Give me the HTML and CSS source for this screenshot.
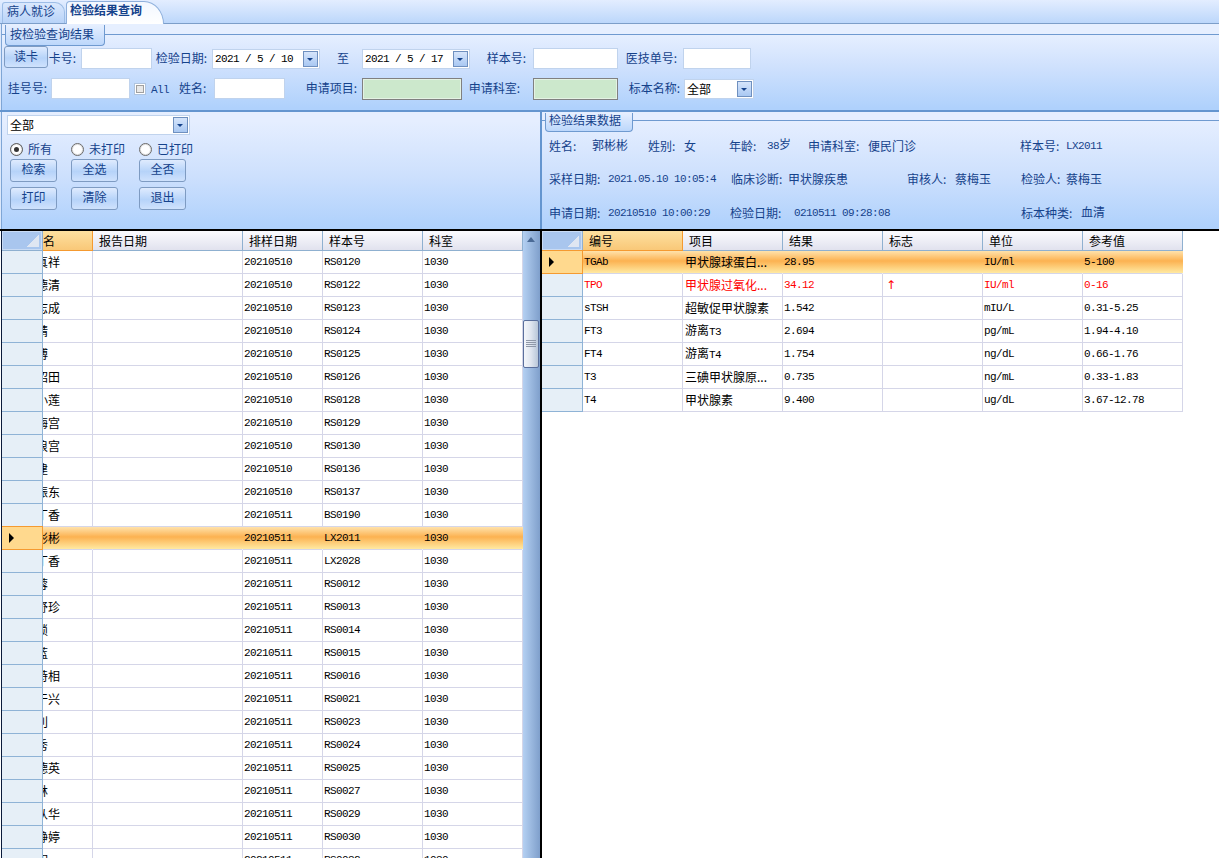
FILE: index.html
```html
<!DOCTYPE html>
<html lang="zh">
<head>
<meta charset="utf-8">
<title>检验结果查询</title>
<link rel="stylesheet" href="styles.css">
</head>
<body>
<nav class="tabs">
  <div class="tab">病人就诊</div>
  <div class="tab active">检验结果查询</div>
</nav>

<section class="query">
  <div class="fieldset">
    <div class="legend">按检验查询结果</div>
    <div class="row row1">
      <button class="btn read">读卡</button>
      <label class="lbl">卡号:</label>
      <div class="input"></div>
      <label class="lbl">检验日期:</label>
      <div class="combo date"><span class="m">2021 / 5 / 10</span><i class="drop"></i></div>
      <label class="lbl to">至</label>
      <div class="combo date"><span class="m">2021 / 5 / 17</span><i class="drop"></i></div>
      <label class="lbl p7">样本号:</label>
      <div class="input"></div>
      <label class="lbl p6">医技单号:</label>
      <div class="input"></div>
    </div>
    <div class="row row2">
      <label class="lbl p4">挂号号:</label>
      <div class="input"></div>
      <div class="check"><i class="box"></i><span class="m">All</span></div>
      <label class="lbl wide">姓名:</label>
      <div class="input"></div>
      <label class="lbl">申请项目:</label>
      <div class="input green"></div>
      <label class="lbl far">申请科室:</label>
      <div class="input green"></div>
      <label class="lbl p4">标本名称:</label>
      <div class="combo sample"><span>全部</span><i class="drop"></i></div>
    </div>
  </div>
</section>

<div class="lower">
  <section class="filter">
    <div class="combo all"><span>全部</span><i class="drop"></i></div>
    <div class="radios">
      <div class="radio on"><i></i>所有</div>
      <div class="radio"><i></i>未打印</div>
      <div class="radio"><i></i>已打印</div>
    </div>
    <div class="btns">
      <button class="btn">检索</button>
      <button class="btn">全选</button>
      <button class="btn">全否</button>
      <button class="btn">打印</button>
      <button class="btn">清除</button>
      <button class="btn">退出</button>
    </div>
  </section>
  <section class="info">
    <div class="fieldset">
      <div class="legend small">检验结果数据</div>
      <div class="irow i1">
        <span>姓名:</span><span class="up">郭彬彬</span><span>姓别:</span><span>女</span><span>年龄:</span><span class="up"><b class="m">38</b>岁</span><span>申请科室:</span><span>便民门诊</span><span>样本号:</span><span class="m">LX2011</span>
      </div>
      <div class="irow i2">
        <span>采样日期:</span><span class="m">2021.05.10 10:05:4</span><span>临床诊断:</span><span>甲状腺疾患</span><span>审核人:</span><span>蔡梅玉</span><span>检验人:</span><span>蔡梅玉</span>
      </div>
      <div class="irow i3">
        <span>申请日期:</span><span class="m">20210510 10:00:29</span><span>检验日期:</span><span class="m">0210511 09:28:08</span><span>标本种类:</span><span class="up">血清</span>
      </div>
    </div>
  </section>
</div>

<div class="grids">
  <div class="gridwrap left">
    <table class="grid">
      <colgroup><col class="c41"><col class="c50"><col class="c150"><col class="c80"><col class="c100"><col class="c100"></colgroup>
      <thead><tr><th class="corner"></th><th class="hot clip">名</th><th>报告日期</th><th>排样日期</th><th>样本号</th><th>科室</th></tr></thead>
      <tbody>
        <tr><td class="rh"></td><td class="name">真祥</td><td></td><td>20210510</td><td>RS0120</td><td>1030</td></tr>
        <tr><td class="rh"></td><td class="name">德清</td><td></td><td>20210510</td><td>RS0122</td><td>1030</td></tr>
        <tr><td class="rh"></td><td class="name">志成</td><td></td><td>20210510</td><td>RS0123</td><td>1030</td></tr>
        <tr><td class="rh"></td><td class="name">靖</td><td></td><td>20210510</td><td>RS0124</td><td>1030</td></tr>
        <tr><td class="rh"></td><td class="name">博</td><td></td><td>20210510</td><td>RS0125</td><td>1030</td></tr>
        <tr><td class="rh"></td><td class="name">绍田</td><td></td><td>20210510</td><td>RS0126</td><td>1030</td></tr>
        <tr><td class="rh"></td><td class="name">小莲</td><td></td><td>20210510</td><td>RS0128</td><td>1030</td></tr>
        <tr><td class="rh"></td><td class="name">梅宫</td><td></td><td>20210510</td><td>RS0129</td><td>1030</td></tr>
        <tr><td class="rh"></td><td class="name">浪宫</td><td></td><td>20210510</td><td>RS0130</td><td>1030</td></tr>
        <tr><td class="rh"></td><td class="name">建</td><td></td><td>20210510</td><td>RS0136</td><td>1030</td></tr>
        <tr><td class="rh"></td><td class="name">振东</td><td></td><td>20210510</td><td>RS0137</td><td>1030</td></tr>
        <tr><td class="rh"></td><td class="name">丁香</td><td></td><td>20210511</td><td>BS0190</td><td>1030</td></tr>
        <tr class="sel"><td class="rh"></td><td class="name">彬彬</td><td></td><td>20210511</td><td>LX2011</td><td>1030</td></tr>
        <tr><td class="rh"></td><td class="name">丁香</td><td></td><td>20210511</td><td>LX2028</td><td>1030</td></tr>
        <tr><td class="rh"></td><td class="name">蓉</td><td></td><td>20210511</td><td>RS0012</td><td>1030</td></tr>
        <tr><td class="rh"></td><td class="name">舒珍</td><td></td><td>20210511</td><td>RS0013</td><td>1030</td></tr>
        <tr><td class="rh"></td><td class="name">锁</td><td></td><td>20210511</td><td>RS0014</td><td>1030</td></tr>
        <tr><td class="rh"></td><td class="name">蓝</td><td></td><td>20210511</td><td>RS0015</td><td>1030</td></tr>
        <tr><td class="rh"></td><td class="name">特相</td><td></td><td>20210511</td><td>RS0016</td><td>1030</td></tr>
        <tr><td class="rh"></td><td class="name">干兴</td><td></td><td>20210511</td><td>RS0021</td><td>1030</td></tr>
        <tr><td class="rh"></td><td class="name">利</td><td></td><td>20210511</td><td>RS0023</td><td>1030</td></tr>
        <tr><td class="rh"></td><td class="name">秀</td><td></td><td>20210511</td><td>RS0024</td><td>1030</td></tr>
        <tr><td class="rh"></td><td class="name">德英</td><td></td><td>20210511</td><td>RS0025</td><td>1030</td></tr>
        <tr><td class="rh"></td><td class="name">林</td><td></td><td>20210511</td><td>RS0027</td><td>1030</td></tr>
        <tr><td class="rh"></td><td class="name">从华</td><td></td><td>20210511</td><td>RS0029</td><td>1030</td></tr>
        <tr><td class="rh"></td><td class="name">静婷</td><td></td><td>20210511</td><td>RS0030</td><td>1030</td></tr>
        <tr><td class="rh"></td><td class="name">明</td><td></td><td>20210511</td><td>RS0032</td><td>1030</td></tr>
      </tbody>
    </table>
    <div class="scrollbar">
      <div class="sb-up"></div>
      <div class="thumb"><i></i></div>
    </div>
  </div>
  <div class="gridwrap right">
    <table class="grid results">
      <colgroup><col class="c41"><col class="c100"><col class="c100"><col class="c100"><col class="c100"><col class="c100"><col class="c100"></colgroup>
      <thead><tr><th class="corner"></th><th class="hot">编号</th><th>项目</th><th>结果</th><th>标志</th><th>单位</th><th>参考值</th></tr></thead>
      <tbody>
        <tr class="sel"><td class="rh"></td><td>TGAb</td><td class="cn">甲状腺球蛋白...</td><td>28.95</td><td></td><td>IU/ml</td><td>5-100</td></tr>
        <tr class="red"><td class="rh"></td><td>TPO</td><td class="cn">甲状腺过氧化...</td><td>34.12</td><td class="flag">↑</td><td>IU/ml</td><td>0-16</td></tr>
        <tr><td class="rh"></td><td>sTSH</td><td class="cn">超敏促甲状腺素</td><td>1.542</td><td></td><td>mIU/L</td><td>0.31-5.25</td></tr>
        <tr><td class="rh"></td><td>FT3</td><td class="cn">游离<span class="m">T3</span></td><td>2.694</td><td></td><td>pg/mL</td><td>1.94-4.10</td></tr>
        <tr><td class="rh"></td><td>FT4</td><td class="cn">游离<span class="m">T4</span></td><td>1.754</td><td></td><td>ng/dL</td><td>0.66-1.76</td></tr>
        <tr><td class="rh"></td><td>T3</td><td class="cn">三碘甲状腺原...</td><td>0.735</td><td></td><td>ng/mL</td><td>0.33-1.83</td></tr>
        <tr><td class="rh"></td><td>T4</td><td class="cn">甲状腺素</td><td>9.400</td><td></td><td>ug/dL</td><td>3.67-12.78</td></tr>
      </tbody>
    </table>
  </div>
</div>
</body>
</html>
```

FILE: styles.css
```css
* { box-sizing: border-box; }
html, body { margin: 0; padding: 0; }
body {
  width: 1219px;
  height: 858px;
  overflow: hidden;
  background: #fff;
  color: #15428b;
  font: 12px/14px "Noto Sans CJK SC", "Liberation Sans", sans-serif;
  display: flex;
  flex-direction: column;
}
i { display: block; font-style: normal; }
label { white-space: nowrap; }
.m {
  font: 11px/14px "Liberation Mono", "Noto Sans CJK SC", monospace;
  letter-spacing: -0.6px;
}
b.m { font-weight: normal; }
.up { position: relative; top: -1px; }

/* tabs */
.tabs {
  height: 24px;
  flex: none;
  display: flex;
  align-items: flex-end;
  padding-left: 2px;
  gap: 1px;
  background: linear-gradient(#e3edff, #bcd7fb);
  border-bottom: 1px solid #7c9ec9;
}
.tab {
  width: 63px;
  height: 21px;
  padding: 1px 0 0 4px;
  border: 1px solid #9dbde6;
  border-bottom: 0;
  border-radius: 3px 10px 0 0;
  background: linear-gradient(#dae8fd, #b8d3f8);
}
.tab.active {
  width: 98px;
  height: 23px;
  margin-bottom: -1px;
  padding: 1px 0 0 3px;
  font-weight: 700;
  color: #15428b;
  border-color: #8fb0dc;
  border-radius: 4px 20px 0 0 / 4px 23px 0 0;
  background: linear-gradient(#f2f7ff, #fff);
}

/* query panel */
.query {
  height: 88px;
  flex: none;
  padding: 10px 0 0 2px;
  background: linear-gradient(#e6efff 12%, #cfe1fd 50%, #afd1fc 98%);
  box-shadow: inset 1px 0 #dce8fb, inset 2px 0 #7fa6d6;
  border-bottom: 2px solid #6495cf;
}
.fieldset {
  position: relative;
  border-top: 1px solid #6f9ad0;
}
.legend {
  position: absolute;
  left: 3px;
  top: -10px;
  width: 100px;
  height: 21px;
  padding: 0 0 0 4px;
  line-height: 17px;
  border: 1px solid #6f9ad0;
  border-top: 0;
  border-radius: 0 0 4px 4px;
  background: linear-gradient(#e6efff, #bcd7fb);
}
.legend.small {
  left: 3px;
  top: -8px;
  width: 88px;
  height: 19px;
  padding-left: 3px;
  line-height: 14px;
}
.row { display: grid; align-items: end; }
.row1 {
  margin-top: 11px;
  height: 23px;
  padding-left: 2px;
  grid-template-columns: 44px 33px 71px 60px 108px 42px 108px 63px 85px 65px 68px;
}
.row2 {
  margin-top: 9px;
  height: 22px;
  padding-left: 2px;
  grid-template-columns: 47px 79px 49px 35px 71px 77px 100px 71px 85px 66px 70px;
}
.lbl {
  align-self: center;
  text-align: right;
  padding-right: 5px;
}
.lbl.to { padding-right: 13px; }
.lbl.wide { padding-right: 8px; }
.lbl.far { padding-right: 13px; }
.lbl.p4 { padding-right: 4px; }
.lbl.p6 { padding-right: 6px; }
.lbl.p7 { padding-right: 7px; }
.row2 .lbl { position: relative; top: -1px; }
.input {
  height: 21px;
  background: #fff;
  border: 1px solid #c0d3ed;
}
.input.green {
  height: 22px;
  background: #cce8cc;
  border: 1px solid #808080;
  box-shadow: inset 0 0 0 1px #e4f2e4;
}
.row2 .input { align-self: start; }
.combo {
  display: flex;
  align-items: center;
  justify-content: space-between;
  height: 20px;
  padding: 0 1px 0 2px;
  background: #fff;
  border: 1px solid #c0d3ed;
  color: #000;
}
.combo .m { color: #000; }
.date { padding-left: 2px; }
.sample { align-self: start; margin-top: 1px; }
.drop {
  position: relative;
  flex: none;
  width: 15px;
  height: 16px;
  border: 1px solid #6f90bf;
  background: linear-gradient(#d6e5fb, #a9c8f2);
}
.drop::after {
  content: "";
  position: absolute;
  left: 3px;
  top: 6px;
  border: 3px solid transparent;
  border-bottom: 0;
  border-top: 3px solid #15428b;
}
.btn {
  display: block;
  padding: 0 0 3px;
  font: inherit;
  color: #15428b;
  border: 1px solid #7e9bc2;
  border-radius: 3px;
  background: linear-gradient(#dfebfe, #b6d3f9 55%, #cfe2fd);
}
.read { align-self: start; height: 22px; }
.check {
  display: flex;
  align-items: center;
  height: 21px;
  align-self: start;
  padding-left: 4px;
  gap: 5px;
}
.check .m { position: relative; top: 1px; }
.box {
  width: 12px;
  height: 12px;
  background: #e8e8e8;
  border: 1px solid #b0c4de;
  box-shadow: inset 0 0 0 1px #fff, inset 0 0 0 2px #a0a0a0;
}

/* lower panels */
.lower {
  height: 117px;
  flex: none;
  display: flex;
  background: linear-gradient(#e5eeff 8%, #cde0fd 55%, #afd1fc 98%);
  box-shadow: inset 1px 0 #dce8fb, inset 2px 0 #7fa6d6;
}
.filter {
  width: 542px;
  flex: none;
  padding: 3px 0 0 7px;
  border-right: 2px solid #6495cf;
}
.combo.all { width: 183px; }
.radios, .btns {
  display: grid;
  grid-template-columns: 61px 68px 60px;
  margin-left: 3px;
}
.radios { margin-top: 7px; height: 14px; color: #15428b; }
.radio { display: flex; align-items: center; gap: 5px; white-space: nowrap; line-height: 12px; }
.radio i {
  width: 13px;
  height: 13px;
  border: 1px solid #6a6a6a;
  border-radius: 50%;
  background: #fff;
  box-shadow: inset 0 0 0 1px #e0e0e0;
}
.radio.on i { background: #333; box-shadow: inset 0 0 0 1px #e8e8e8, inset 0 0 0 3px #fff; }
.btns { margin-top: 3px; grid-auto-rows: 23px; row-gap: 5px; }
.btns .btn { width: 47px; }
.info { flex: 1; padding-top: 8px; }
.info .fieldset { padding-top: 15px; }
.irow {
  display: grid;
  height: 20px;
  align-items: center;
  padding-left: 7px;
  white-space: nowrap;
}
.i1 { grid-template-columns: 43px 56px 36px 45px 38px 41px 60px 152px 46px auto; }
.i2 { grid-template-columns: 59px 123px 57px 119px 48px 66px 45px auto; margin-top: 13px; }
.i3 { grid-template-columns: 59px 122px 64px 227px 60px auto; margin-top: 14px; }

/* grids */
.grids {
  flex: 1;
  min-height: 0;
  display: flex;
  border-top: 2px solid #000;
}
.gridwrap { height: 100%; overflow: hidden; flex: none; }
.gridwrap.left {
  display: flex;
  margin-left: 1px;
  border-left: 1px solid #0a1a3a;
  border-right: 2px solid #000;
  width: 541px;
}
.gridwrap.right { flex: 1; }
.grid {
  table-layout: fixed;
  border-collapse: separate;
  border-spacing: 0;
  flex: none;
  width: 521px;
  color: #000;
  font: 11px/14px "Liberation Mono", "Noto Sans CJK SC", monospace;
  letter-spacing: -0.6px;
}
.grid.results { width: 641px; }
.c41 { width: 41px; }
.c50 { width: 50px; }
.c80 { width: 80px; }
.c100 { width: 100px; }
.c150 { width: 150px; }
th {
  height: 20px;
  padding: 1px 0 0 6px;
  text-align: left;
  font: 12px/14px "Noto Sans CJK SC", sans-serif;
  letter-spacing: 0;
  color: #000;
  background: linear-gradient(#fbfbfe, #e1e2ee);
  border-right: 1px solid #8fb0d0;
  border-bottom: 1px solid #8fb0d0;
}
th.hot {
  background: linear-gradient(#fde0a0, #f9c878);
  border-right-color: #f59a30;
  border-bottom-color: #f59a30;
}
th.clip { padding-left: 0; }
th.corner {
  background:
    linear-gradient(to bottom right, transparent 50%, #dfe6f2 50%) no-repeat right 3px bottom 3px / 12px 12px,
    #a9c6ee;
  box-shadow: inset 0 0 0 1px #c9dbf4;
}
td {
  height: 23px;
  padding: 0 0 0 1px;
  overflow: hidden;
  white-space: nowrap;
  border-right: 1px solid #d5d6e8;
  border-bottom: 1px solid #d5d6e8;
}
td.rh {
  background: #e6eff7;
  border-right-color: #8fb3d6;
  border-bottom-color: #8fb3d6;
}
td.name, td.cn {
  font: 12px/14px "Noto Sans CJK SC", sans-serif;
  letter-spacing: 0;
}
td.name { padding: 0; text-indent: -7px; }
td.cn { padding-left: 2px; }
.results td { padding-left: 1px; }
.results td.cn { padding-left: 2px; }
.results td.rh { padding-left: 0; }
.results td.flag { padding-left: 3px; font: 12px/14px "DejaVu Sans", sans-serif; }
tr.red td { color: #f00; }
tr.sel td {
  background: linear-gradient(#ffe2ab, #fcb251 45%, #ffe9a2);
  border-right-color: transparent;
}
tr.sel td.rh {
  position: relative;
  background: #ffd98e;
  border-right-color: #f59a30;
  border-bottom-color: #f59a30;
  box-shadow: 0 -1px #f59a30;
}
tr.sel td.rh::after {
  content: "";
  position: absolute;
  left: 7px;
  top: 6px;
  border: 5px solid transparent;
  border-right: 0;
  border-left: 5px solid #000;
}

/* scrollbar */
.scrollbar {
  width: 17px;
  flex: none;
  background: linear-gradient(90deg, #b4d0f2, #7f9fcb);
}
.sb-up {
  height: 20px;
  position: relative;
}
.sb-up::after {
  content: "";
  position: absolute;
  left: 4px;
  top: 6px;
  border: 4px solid transparent;
  border-top: 0;
  border-bottom: 5px solid #4a6a96;
}
.thumb {
  margin: 69px 0 0 0;
  width: 16px;
  height: 48px;
  border: 1px solid #5a6f9c;
  border-radius: 2px;
  background: linear-gradient(90deg, #f3f6fb, #dfe5ef 50%, #b8c6d8);
  display: flex;
  align-items: center;
  justify-content: center;
}
.thumb i {
  width: 10px;
  height: 8px;
  background: repeating-linear-gradient(#8f98a8 0 1px, transparent 1px 2px);
}
```
